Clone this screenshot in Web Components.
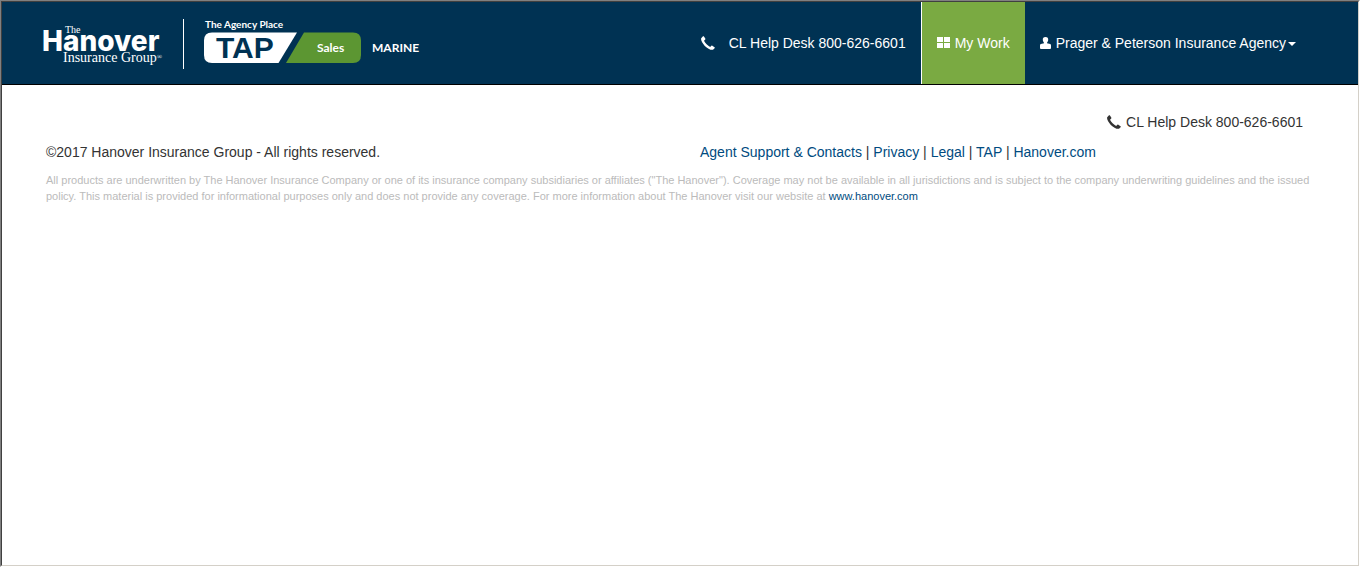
<!DOCTYPE html>
<html lang="en">
<head>
<meta charset="utf-8">
<title>TAP Sales Marine</title>
<style>
html, body { margin: 0; }
body { font: 14px/20px "Liberation Sans", Arial, sans-serif; color: #333; background: #fff; }
</style>
</head>
<body>
<page-frame>
  <site-header slot="header">
    <hanover-brand slot="brand"></hanover-brand>
    <nav-item icon="phone" wide>CL Help Desk 800-626-6601</nav-item>
    <nav-item icon="tiles" href="#work" active>My Work</nav-item>
    <nav-item icon="user" menu>Prager &amp; Peterson Insurance Agency</nav-item>
  </site-header>
  <site-footer></site-footer>
</page-frame>
<script>
const icons = {
  phone: '<svg viewBox="0 0 14 14" width="14" height="14"><path fill="currentColor" d="M0.2 2.2 2 0.3 2.8 0.2 4.4 2.8 4.3 3.5 3 4.8C4 6.9 6.900 9.800 9.200 11L10.300 9.700 11 9.600 13.800 11.400V12L12 13.700C10.300 14.400 6.500 12.600 3.800 9.900 1.300 7.300-.5 3.800.2 2.200Z"/></svg>',
  tiles: '<svg viewBox="0 0 14 14" width="14" height="14"><path fill="currentColor" d="M0 1h6v5H0zM7 1h6v5H7zM0 7h6v5H0zM7 7h6v5H7z"/></svg>',
  user: '<svg viewBox="0 0 12 14" width="12" height="14"><path fill="currentColor" d="M5.500 1C7.500 1 8.400 2.300 8.200 4.100 8.100 5.200 7.500 6.200 7 6.800V7.300L10.200 8Q11 8.300 11 9.500V12Q11 13 10 13H1Q0 13 0 12V9.500Q0 8.300 .8 8L4 7.300V6.800C3.500 6.200 2.900 5.200 2.800 4.100 2.600 2.300 3.500 1 5.500 1Z"/></svg>'
};

function define(name, render) {
  customElements.define(name, class extends HTMLElement {
    connectedCallback() {
      if (this.shadowRoot) return;
      this.attachShadow({ mode: 'open' }).innerHTML = render(this);
    }
  });
}

define('page-frame', () => `
<style>
:host { display: flex; box-sizing: border-box; min-height: 100vh; border: 1px solid; border-color: #808080 #fff #fff #808080; }
.inner { flex: 1; min-width: 0; border: 1px solid; border-color: #404040 #d4d0c8 #d4d0c8 #404040; }
</style>
<div class="inner"><slot name="header"></slot><main><slot></slot></main></div>`);

define('site-header', () => `
<style>
:host { display: block; background: #003253; color: #fff; border-bottom: 1px solid #000; }
header { display: flex; justify-content: space-between; min-height: 82px; padding: 0 47px 0 40px; }
nav { display: flex; align-items: stretch; }
</style>
<header><slot name="brand"></slot><nav aria-label="Main"><slot></slot></nav></header>`);

define('hanover-brand', () => `
<style>
:host { display: block; }
svg { display: block; }
text { fill: #fff; }
.wordmark { font: 800 28px Inter, sans-serif; }
.serif { font-family: "Liberation Serif", serif; }
.sans { font-family: Lato, sans-serif; font-weight: 700; }
.tap { font: 700 30px "Liberation Sans", Arial, sans-serif; fill: #003253; }
</style>
<svg width="390" height="82" viewBox="42 2 390 82" role="img" aria-label="The Hanover Insurance Group, TAP Sales Marine">
  <text class="serif" x="65" y="33" font-size="10">The</text>
  <text class="wordmark" x="42" y="51">Hanover</text>
  <text class="serif" x="63" y="62" font-size="14">Insurance Group<tspan font-size="7" dy="-3">®</tspan></text>
  <path fill="#fff" d="M183 19h1v50h-1z"/>
  <text class="sans" x="205" y="28" font-size="10">The Agency Place</text>
  <path fill="#fff" d="M212 32.500H297L278.500 63H212Q204 63 204 55V40.500Q204 32.500 212 32.500Z"/>
  <path fill="#5c9632" d="M304 32.500H353Q361 32.500 361 40.500V55Q361 63 353 63H286Z"/>
  <text class="tap" x="216" y="58">TAP</text>
  <text class="sans" x="317" y="52" font-size="12">Sales</text>
  <text class="sans" x="372" y="52" font-size="12">MARINE</text>
</svg>`);

define('nav-item', el => {
  const body = `${icons[el.getAttribute('icon')]}<span><slot></slot></span>`;
  const href = el.getAttribute('href');
  const inner = el.hasAttribute('menu')
    ? `<button type="button" aria-haspopup="true">${body}<i></i></button>`
    : href ? `<a href="${href}">${body}</a>` : `<div>${body}</div>`;
  return `
<style>
:host { display: flex; white-space: nowrap; }
:host([active]) { background: #7aaa42; border-left: 1px solid #fff; }
a, button, div { display: flex; align-items: center; padding: 0 15px; font: inherit; color: inherit; background: none; border: 0; text-decoration: none; }
svg { margin-right: 4px; flex: none; }
:host([wide]) svg { margin-right: 14px; }
i { border: 4px solid transparent; border-top-color: #fff; border-bottom: 0; margin: 2px 0 0 2px; }
</style>${inner}`;
});

define('site-footer', () => `
<style>
:host { display: block; padding: 27px 44px 0; }
a { color: #004b80; text-decoration: none; }
.help { display: flex; justify-content: flex-end; align-items: center; gap: 5px; padding-right: 11px; }
.row { display: grid; grid-template-columns: 1fr 1fr; margin-top: 10px; column-gap: 40px; }
p { margin: 10px 0 0; font-size: 11px; line-height: 16px; color: #bbb; }
</style>
<footer>
  <div class="help">${icons.phone}<span>CL Help Desk 800-626-6601</span></div>
  <div class="row">
    <span>©2017 Hanover Insurance Group - All rights reserved.</span>
    <nav aria-label="Footer"><a href="#support">Agent Support &amp; Contacts</a> | <a href="#privacy">Privacy</a> | <a href="#legal">Legal</a> | <a href="#tap">TAP</a> | <a href="#hanover">Hanover.com</a></nav>
  </div>
  <p>All products are underwritten by The Hanover Insurance Company or one of its insurance company subsidiaries or affiliates ("The Hanover"). Coverage may not be available in all jurisdictions and is subject to the company underwriting guidelines and the issued policy. This material is provided for informational purposes only and does not provide any coverage. For more information about The Hanover visit our website at <a href="#www">www.hanover.com</a></p>
</footer>`);
</script>
</body>
</html>
